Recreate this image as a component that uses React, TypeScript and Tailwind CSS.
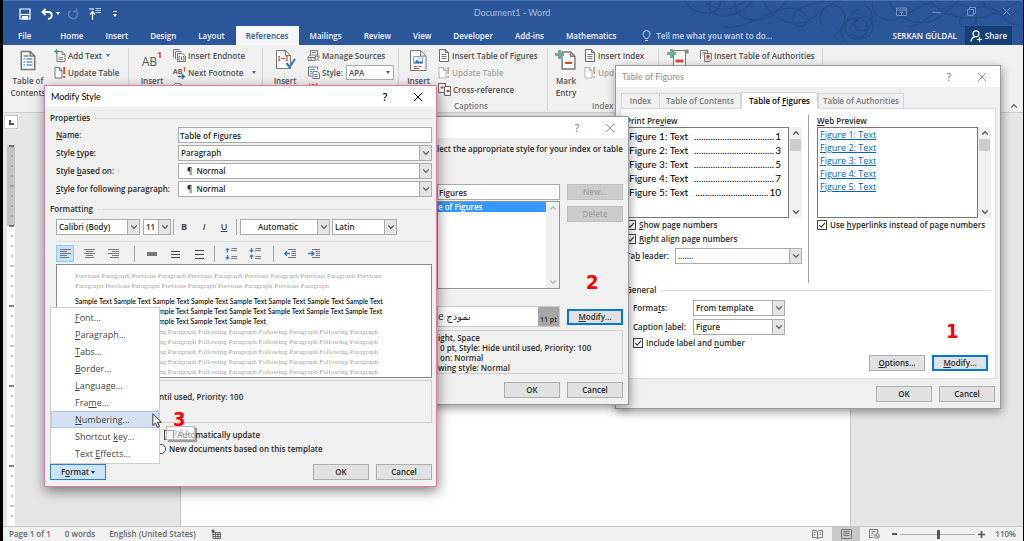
import React, { useState } from "react";
import type { ReactNode } from "react";

const BTN =
  "flex h-4 w-14 flex-none items-center justify-center border border-[#adadad] bg-[#e1e1e1] text-[#2a2a2a]";
const BTN_DEFAULT =
  "flex h-4 w-14 flex-none items-center justify-center border border-[#0078d7] bg-[#e1e1e1] text-[#2a2a2a] outline outline-1 -outline-offset-2 outline-[#0078d7]";
const BTN_DISABLED =
  "flex h-4 w-14 flex-none items-center justify-center border border-[#bfbfbf] bg-[#cccccc] text-[#a2a2a2]";

/* Renders a caption whose access key is the letter after "&". */
function Key({ t }: { t: string }) {
  const i = t.indexOf("&");
  if (i < 0) return <>{t}</>;
  return (
    <span className="whitespace-nowrap">
      {t.slice(0, i)}
      <span className="underline underline-offset-1">{t[i + 1]}</span>
      {t.slice(i + 2)}
    </span>
  );
}

function Chevron({ up, className }: { up?: boolean; className?: string }) {
  return (
    <svg viewBox="0 0 8 8" className={className ?? "size-2"} fill="none" stroke="currentColor" strokeWidth="1.2">
      <path d={up ? "M1.2 5.6 4 2.6 6.8 5.6" : "M1.2 2.4 4 5.4 6.8 2.4"} />
    </svg>
  );
}

function Combo({ label, id, value, className, pad }: { label?: string; id?: string; value: string; className: string; pad?: string }) {
  return (
    <div className={"relative h-4 border border-[#ababab] bg-white " + className}>
      <select
        id={id}
        aria-label={label}
        className={"block h-full w-full appearance-none bg-transparent leading-[14px] outline-none " + (pad ?? "pl-[2px]")}
      >
        <option>{value}</option>
      </select>
      <span className="pointer-events-none absolute inset-y-0 right-0 flex w-3 items-center justify-center border-l border-[#ababab] bg-[#e4e4e4] text-[#555]">
        <Chevron />
      </span>
    </div>
  );
}

function Check({ children, defaultChecked, id }: { children: ReactNode; defaultChecked?: boolean; id: string }) {
  return (
    <div className="flex h-[14px] items-center gap-[3px]">
      <span className="relative flex size-[10px] flex-none">
        <input
          id={id}
          type="checkbox"
          defaultChecked={defaultChecked}
          className="peer size-[10px] appearance-none border border-[#444] bg-white"
        />
        <svg viewBox="0 0 10 10" className="pointer-events-none absolute inset-0 hidden size-[10px] peer-checked:block" fill="none" stroke="#333" strokeWidth="1.1">
          <path d="M2.2 5 4.2 7.2 8 2.8" />
        </svg>
      </span>
      <label htmlFor={id} className="whitespace-nowrap">{children}</label>
    </div>
  );
}

function Group({ title }: { title: string }) {
  return (
    <div className="flex h-3 items-center gap-1">
      <span>{title}</span>
      <span className="h-px flex-1 bg-[#dcdcdc]" />
    </div>
  );
}

function TitleBar({ title, active }: { title?: string; active?: boolean }) {
  return (
    <header className={"flex h-[21px] flex-none items-center bg-white pr-[13px] font-[Lato] text-[9px] font-normal " + (active ? "text-black" : "text-[#8c8c8c]")}>
      <h2 className="flex-1 pl-[6px]">{title}</h2>
      <button aria-label="Help" className="w-3 font-['Open_Sans'] text-[10px] font-semibold leading-none">?</button>
      <button aria-label="Close" className="ml-[22px]">
        <svg viewBox="0 0 10 10" className="size-[10px]" fill="none" stroke="currentColor" strokeWidth="1">
          <path d="M1 1 9 9M9 1 1 9" />
        </svg>
      </button>
    </header>
  );
}

function ScrollBar({ thumb, className }: { thumb?: boolean; className?: string }) {
  return (
    <div className={"flex w-[13px] flex-none flex-col items-center bg-[#f0f0f0] py-[2px] " + (className ?? "text-[#444]")}>
      <Chevron up />
      {thumb && <span className="mt-[2px] h-3 w-[11px] bg-[#cdcdcd]" />}
      <span className="flex-1" />
      <Chevron />
    </div>
  );
}

/* ---------- ribbon icons ---------- */

function DocIcon({ className, children, stroke }: { className?: string; children?: ReactNode; stroke?: string }) {
  return (
    <svg viewBox="0 0 12 13" className={className ?? "h-[13px] w-3 flex-none"} fill="none">
      <path d="M1.5.5h6l3 3v9h-9z" fill="#fff" stroke={stroke ?? "#6a6a6a"} />
      <path d="M7.5.5v3h3" stroke={stroke ?? "#6a6a6a"} />
      {children}
    </svg>
  );
}

const Lines = ({ c = "#777" }: { c?: string }) => <path d="M3.5 5.5h5M3.5 7.5h5M3.5 9.5h5" stroke={c} />;
const Plus = ({ className }: { className?: string }) => (
  <svg viewBox="0 0 9 9" className={className ?? "size-[9px]"} stroke="#6fae93" strokeWidth="3">
    <path d="M4.5 0v9M0 4.5h9" />
  </svg>
);

function AddTextIcon() {
  return (
    <svg viewBox="0 0 12 13" className="h-[13px] w-3 flex-none" fill="none">
      <path d="M3 2.5h5l3 3v7H3z" fill="#fff" stroke="#777" />
      <path d="M8 2.5v3h3M5 8.5h4M5 10.5h4" stroke="#777" />
      <path d="M2.5 0v5M0 2.5h5" stroke="#4d9a78" strokeWidth="1.4" />
    </svg>
  );
}

function UpdateIcon({ disabled }: { disabled?: boolean }) {
  const c = disabled ? "#b5aeb5" : "#777";
  return (
    <svg viewBox="0 0 12 13" className="h-[13px] w-3 flex-none" fill="none">
      <path d="M1 1.5h4.5l2.5 3v7.5H1z" fill="#fff" stroke={c} />
      <path d="M5.5 1.5v3H8" stroke={c} />
      <path d="M10.2 1v7M10.2 10v2" stroke={disabled ? "#b5aeb5" : "#d9482b"} strokeWidth="1.8" />
    </svg>
  );
}

function EndnoteIcon() {
  return (
    <svg viewBox="0 0 13 13" className="size-[13px] flex-none" fill="none" stroke="#777">
      <path d="M.5 8V.5h6M2.5 10V2.5h6" />
      <path d="M4.5 4.5h5l3 2.500v5.500h-8z" fill="#fff" />
      <path d="M7 7.500H6v3.500h1M10 7.500h1v3.500h-1M8.500 7.500v3.500" stroke="#3e76b8" />
    </svg>
  );
}

function NextFootnoteIcon() {
  return (
    <span className="relative flex h-3 w-[13px] flex-none text-[7px] leading-[9px] text-[#444]">
      AB
      <svg viewBox="0 0 13 12" className="absolute inset-0 h-3 w-[13px]" fill="none">
        <path d="M10.500 1 11.500.500v4" stroke="#d9482b" />
        <path d="M5 9.500h6M9 7.200l2.400 2.300L9 11.800" stroke="#2f6db5" strokeWidth="1.300" />
      </svg>
    </span>
  );
}

function SourcesIcon() {
  return (
    <svg viewBox="0 0 13 13" className="size-[13px] flex-none" fill="none" stroke="#777">
      <path d="M3.500 6V1.500h7V6M1 8.500 3 6h8l1.500 2.500M1 8.500h7v3H1z" fill="#fff" />
      <path d="M5 3.500h4M2.500 10h3" />
      <circle cx="9.500" cy="9" r="1.800" />
      <path d="M11 10.500 12.500 12" />
    </svg>
  );
}

function StyleIcon() {
  return (
    <svg viewBox="0 0 13 13" className="size-[13px] flex-none" fill="none">
      <path d="M1.500 1h9v2.500M1.500 1v9H5" stroke="#777" />
      <path d="M3 3.500h5M3 5.500h2M3 7.500h2" stroke="#5b93cf" />
      <path d="M6 5.500h4l2.500 2v5H6z" fill="#fff" stroke="#777" />
      <path d="M7.500 8.500h3M7.500 10.500h3" stroke="#3e76b8" />
    </svg>
  );
}

function BibliographyIcon() {
  return (
    <svg viewBox="0 0 13 13" className="size-[13px] flex-none" fill="none" stroke="#d9482b">
      <path d="M1.500 3.500 3 .8M5 1.500h2M8.500 3l1-2 1 2" strokeWidth="1.200" />
      <path d="M2 5h9v7.500H2z" stroke="#777" fill="#fff" />
    </svg>
  );
}

function CrossRefIcon() {
  return (
    <svg viewBox="0 0 13 13" className="size-[13px] flex-none" fill="none">
      <path d="M.5.5h7v9h-7z" fill="#fff" stroke="#666" />
      <path d="M6.500 3.500h6v9h-6z" fill="#fff" stroke="#666" />
      <path d="M2.500 4.500h3M8.500 8h3" stroke="#d9482b" strokeWidth="2" />
    </svg>
  );
}

function AuthoritiesIcon() {
  return (
    <svg viewBox="0 0 12 12" className="size-3 flex-none" fill="none" stroke="#777">
      <path d="M.5 9V.5h7V3M2.500 2.500h3M2.500 4.500h1" />
      <path d="M4.500 3.500h7v6l-2 2h-5z" fill="#fff" />
      <circle cx="8" cy="6.500" r="1.500" fill="#d9482b" stroke="#d9482b" />
      <path d="M7 8.500v2M9 8.500v2" stroke="#d9482b" />
    </svg>
  );
}

function BigButton({ icon, lines, className }: { icon: ReactNode; lines: string[]; className?: string }) {
  return (
    <button className={"flex flex-none flex-col items-center pt-[4px] leading-3 " + (className ?? "")}>
      <span className="flex h-[22px] items-center">{icon}</span>
      <span className="mt-[4px]">
        {lines.map((l) => (
          <span key={l} className="block whitespace-nowrap">{l}</span>
        ))}
      </span>
    </button>
  );
}

function Small({ icon, text, disabled, arrow }: { icon: ReactNode; text: string; disabled?: boolean; arrow?: string }) {
  return (
    <button disabled={disabled} className={"flex h-[17px] items-center gap-[2px] whitespace-nowrap " + (disabled ? "text-[#a6a6a6]" : "")}>
      {icon}
      {text}
      {arrow && <span className={"border-x-[2px] border-t-[3px] border-x-transparent border-t-[#666] " + arrow} />}
    </button>
  );
}

const Sep = ({ className }: { className?: string }) => <span className={"mt-[3px] h-[63px] w-px flex-none bg-[#d5d5d5] " + (className ?? "")} />;

function Ribbon() {
  return (
    <section className="flex h-[68px] flex-none border-b border-[#cfcfcf] bg-[#f1f1f1] pl-1 font-semibold text-[#505050]">
      <div className="flex w-[121px] flex-none">
        <BigButton
          className="w-[42px]"
          lines={["Table of", "Contents"]}
          icon={
            <DocIcon className="h-[21px] w-[18px]" stroke="#777">
              <path d="M3 3.500h3.500M3 5.500h1M3 7.500h1M3 9.500h1M5 5.500h4M5 7.500h4M5 9.500h4" stroke="#5b93cf" strokeWidth=".9" />
            </DocIcon>
          }
        />
        <div className="pl-[5px] pt-[2px]">
          <Small icon={<AddTextIcon />} text="Add Text" arrow="ml-[2px]" />
          <Small icon={<UpdateIcon />} text="Update Table" />
        </div>
      </div>
      <Sep />
      <div className="flex w-[133px] flex-none">
        <BigButton
          className="w-[42px] pl-[4px]"
          lines={["Insert"]}
          icon={
            <span className="flex pt-[3px] text-[12px] font-medium text-[#555]">
              AB<sup className="text-[9px] font-bold leading-[8px] text-[#d9482b]">1</sup>
            </span>
          }
        />
        <div className="pl-[2px] pt-[2px]">
          <Small icon={<EndnoteIcon />} text="Insert Endnote" />
          <Small icon={<NextFootnoteIcon />} text="Next Footnote" arrow="ml-[7px]" />
          <span className="flex h-[17px] items-center"><DocIcon stroke="#999" /></span>
        </div>
      </div>
      <Sep />
      <div className="flex w-[135px] flex-none">
        <BigButton
          className="w-[44px]"
          lines={["Insert"]}
          icon={
            <svg viewBox="0 0 21 22" className="h-[22px] w-[21px]" fill="none">
              <path d="M1.500 1.500h9l5 5v13h-14z" fill="#fff" stroke="#777" />
              <path d="M10.500 1.500v5h5" stroke="#777" />
              <path d="M5 7.500H4v4h1M11 7.500h1v4h-1M6 9.500h4" stroke="#d9482b" strokeWidth="1.200" />
              <path d="m11.500 14 3 4 5.500-8" stroke="#3e76b8" strokeWidth="2.200" />
            </svg>
          }
        />
        <div className="pt-[2px]">
          <Small icon={<SourcesIcon />} text="Manage Sources" />
          <div className="flex h-[17px] items-center gap-[2px]">
            <StyleIcon />
            <label htmlFor="cite">Style:</label>
            <div className="relative ml-px h-[15px] w-12 border border-[#ababab] bg-white">
              <select id="cite" className="block h-full w-full appearance-none bg-transparent pl-[2px] leading-[13px]">
                <option>APA</option>
              </select>
              <span className="pointer-events-none absolute right-[3px] top-[5px] border-x-[2px] border-t-[3px] border-x-transparent border-t-[#555]" />
            </div>
          </div>
          <span className="flex h-[17px] items-center"><BibliographyIcon /></span>
        </div>
      </div>
      <Sep />
      <div className="flex w-[148px] flex-none">
        <BigButton
          className="w-[39px]"
          lines={["Insert"]}
          icon={
            <svg viewBox="0 0 17 21" className="h-[21px] w-[17px]" fill="none">
              <path d="M.5.5h10l5.500 5.500v14.500H.5z" fill="#fff" stroke="#777" />
              <path d="M10.500.5V6H16" stroke="#777" />
              <path d="M3.500 6.500h9v7h-9z" fill="#fff" stroke="#7fa7d6" />
              <path d="m4 13 3-3.500L9.500 12l1.500-1.500 1.500 2.500z" fill="#3e76b8" />
              <circle cx="9.500" cy="8.500" r="1" fill="#e8b04a" />
              <path d="M4 16.500h3M8.500 16.500h3M4 18.500h5" stroke="#d9482b" />
            </svg>
          }
        />
        <div className="pt-[2px]">
          <Small icon={<DocIcon><Lines /></DocIcon>} text="Insert Table of Figures" />
          <Small icon={<UpdateIcon disabled />} text="Update Table" disabled />
          <Small icon={<CrossRefIcon />} text="Cross-reference" />
          <p className="pl-[16px] pt-[2px] leading-[12px] text-[#777]">Captions</p>
        </div>
      </div>
      <Sep />
      <div className="flex w-[110px] flex-none">
        <BigButton
          className="w-[36px]"
          lines={["Mark", "Entry"]}
          icon={
            <span className="relative flex pl-[5px]">
              <DocIcon className="h-[21px] w-[17px]" stroke="#777">
                <path d="M3.500 8.200h5" stroke="#d9482b" strokeWidth="1.600" />
              </DocIcon>
              <Plus className="absolute left-0 top-0 size-[9px]" />
            </span>
          }
        />
        <div className="pt-[2px]">
          <Small icon={<DocIcon><Lines /></DocIcon>} text="Insert Index" />
          <Small icon={<UpdateIcon disabled />} text="Upd" disabled />
          <p className="pl-[8px] pt-[19px] leading-[12px] text-[#777]">Index</p>
        </div>
      </div>
      <Sep />
      <div className="flex w-[163px] flex-none">
        <span className="relative ml-[8px] mt-[4px] flex h-[22px] w-[23px] flex-none pl-[6px]">
          <svg viewBox="0 0 16 21" className="h-[21px] w-4" fill="none">
            <path d="M.5 1.500h12v19H.5z" fill="#fff" stroke="#777" />
            <path d="M12.500.5h3v4h-3z" fill="#888" />
            <path d="M2.500 12h8" stroke="#d9482b" strokeWidth="3" />
          </svg>
          <Plus className="absolute left-0 top-0 size-[9px]" />
        </span>
        <div className="pl-[10px] pt-[2px]">
          <Small icon={<AuthoritiesIcon />} text="Insert Table of Authorities" />
        </div>
      </div>
      <Sep />
      <span className="flex-1" />
      <button aria-label="Collapse the ribbon" className="self-end px-[5px] pb-[2px] text-[#555]">
        <Chevron up />
      </button>
    </section>
  );
}

/* ---------- application header ---------- */

function QuickAccess() {
  return (
    <div className="flex h-[25px] items-center pl-4 text-white">
      <button aria-label="Save">
        <svg viewBox="0 0 12 12" className="size-3" fill="none" stroke="#fff" strokeWidth="1.200">
          <path d="M1 1h10v10H1z" />
          <path d="M1 6.500h10" />
          <path d="M3.500 8.500h5V11h-5z" fill="#fff" />
        </svg>
      </button>
      <button aria-label="Undo" className="ml-[10px] flex items-center gap-[3px]">
        <svg viewBox="0 0 12 12" className="size-3" fill="none" stroke="#fff" strokeWidth="1.800">
          <path d="M4.500 1 1.500 4 4.500 7M1.500 4H7c5 0 5 6 0 7" />
        </svg>
        <span className="border-x-[2px] border-t-[3px] border-x-transparent border-t-white" />
      </button>
      <button aria-label="Redo" className="ml-[7px]">
        <svg viewBox="0 0 12 12" className="size-3" fill="none" stroke="#5b80b8" strokeWidth="1.500">
          <path d="M3.500 2.500a4.500 4.500 0 1 0 5.500.3M9.500 0v3.500H6" />
        </svg>
      </button>
      <button aria-label="Paragraph spacing" className="ml-[10px]">
        <svg viewBox="0 0 13 12" className="h-3 w-[13px]" fill="none" stroke="#fff">
          <path d="M0 1h5M3.500 12V4M1 6.500 3.500 3.500 6 6.500" strokeWidth="1.200" />
          <path d="M6.500.5H12M6.500 2.500H12M6.500 4.500H12" opacity=".7" />
        </svg>
      </button>
      <button aria-label="Customize Quick Access Toolbar" className="ml-[11px] flex flex-col items-center gap-[2px]">
        <span className="h-px w-[4px] bg-white" />
        <span className="border-x-[2px] border-t-[3px] border-x-transparent border-t-white" />
      </button>
    </div>
  );
}

function Swirls() {
  return (
    <svg viewBox="0 0 340 45" className="pointer-events-none absolute right-0 top-0 h-[45px] w-[340px]" fill="none" stroke="#244d8a" strokeWidth="1.400">
      <path d="M2 0c8 14 28 16 34 6s-8-12-10-2c-2 12 24 18 44-4M52 0c-4 18 24 26 40 12C98 6 102 2 104 0" />
      <path d="M40 26c20 4 40-14 60-18s30 10 22 16-16-4-10-12 22-10 30-12M80 0c14 26 40 28 56 12 8-8 14-12 24-12" />
      <path d="M140 25c-8-10 2-24 14-20s10 22-4 30M176 20c-10 0-12 14-2 16s16-14 4-18-26 8-16 22M176 8c-18 8-18 30 0 30s18-24 4-22-8 14 0 14 14-20 2-26" />
      <path d="M190 0c-4 14 14 24 28 16 16-8 28-18 44-16M206 0c10 22 36 28 54 14 10-8 12-12 16-14" />
      <path d="M226 26c20-4 30-24 52-22s18 24 4 22 0-22 20-20 18 18 34 18M246 0c22 20 50 26 90 0" />
      <path d="M22 0c10 10 26 12 40 0M300 0c6 16 24 18 38 8" />
    </svg>
  );
}

const TABS = ["Home", "Insert", "Design", "Layout", "References", "Mailings", "Review", "View", "Developer", "Add-ins", "Mathematics"];

function AppHeader() {
  return (
    <header className="relative flex-none overflow-hidden border-t border-[#4a72ac] bg-[#2b579a] text-white">
      <Swirls />
      <div className="relative flex">
        <div className="flex-1">
          <QuickAccess />
        </div>
        <h1 className="pl-[9px] pt-[6px] font-[Lato] text-[9px] font-normal leading-3 text-[#a9bcd9]">Document1 - Word</h1>
        <div className="flex flex-1 items-start justify-end gap-6 pr-[11px] pt-[5px]">
          <button aria-label="Ribbon display options">
            <svg viewBox="0 0 11 11" className="size-[11px]" fill="none" stroke="#7391be">
              <path d="M.5 2h10v7.500H.5zM.5 4h10M5.500 9V5.500M4 7l1.500-1.500L7 7" />
            </svg>
          </button>
          <button aria-label="Minimize">
            <svg viewBox="0 0 11 11" className="size-[11px]" stroke="#7391be">
              <path d="M1.500 6.500h8" />
            </svg>
          </button>
          <button aria-label="Restore">
            <svg viewBox="0 0 11 11" className="size-[11px]" fill="none" stroke="#7391be">
              <path d="M1.500 3.500h6v6h-6zM3.500 3.500v-2h6v6h-2" />
            </svg>
          </button>
          <button aria-label="Close Word">
            <svg viewBox="0 0 11 11" className="size-[11px]" stroke="#7391be">
              <path d="m2 2 7 7M9 2 2 9" />
            </svg>
          </button>
        </div>
      </div>
      <nav className="relative flex h-[19px] items-stretch font-semibold text-[#f2f5fa]">
        <a href="#file" className="flex items-center pl-[15px] pr-[18px]">File</a>
        {TABS.map((t) => (
          <a
            key={t}
            href={"#" + t}
            className={t === "References" ? "flex items-center bg-[#f5f6f7] px-[10px] text-[#2b579a]" : "flex items-center px-[11px]"}
          >
            {t}
          </a>
        ))}
        <span className="ml-[15px] flex items-center gap-[5px] text-[#c7d4e8]">
          <svg viewBox="0 0 9 12" className="h-3 w-[9px]" fill="none" stroke="#c7d4e8">
            <path d="M3 8.500C3 7 1 6.500 1 4a3.500 3.500 0 0 1 7 0c0 2.500-2 3-2 4.500zM3 10.500h3" />
          </svg>
          Tell me what you want to do...
        </span>
        <span className="flex-1" />
        <span className="flex items-center pr-2">SERKAN GÜLDAL</span>
        <button className="mr-[11px] flex items-center gap-[3px] bg-[#173f77] px-[5px]">
          <svg viewBox="0 0 12 12" className="size-3" fill="none" stroke="#fff" strokeWidth="1.200">
            <circle cx="6" cy="3.800" r="3" />
            <path d="M1 11.500c.5-3 2-4.500 4-4.800M9.500 7v5M7 9.500h5" />
          </svg>
          Share
        </button>
      </nav>
    </header>
  );
}

/* ---------- document area ---------- */

function VerticalRuler() {
  return (
    <div className="flex w-[14px] flex-none flex-col items-center">
      <span className="mt-[2px] flex size-[14px] items-center justify-center border border-[#ccc] bg-white">
        <span className="size-[5px] border-b-2 border-l-2 border-[#555]" />
      </span>
      <svg className="mt-[16px] w-2 flex-1" preserveAspectRatio="none">
        <rect width="8" height="81" fill="#c3c3c3" />
        <rect y="81" width="8" height="400" fill="#fff" />
        {Array.from({ length: 38 }, (_, i) => {
          const k = i % 8;
          return k === 0 ? (
            <path key={i} d={`M2 ${i * 10 + 1}h5`} stroke="#555" strokeWidth="1.500" />
          ) : (
            <path key={i} d={k === 4 ? `M3 ${i * 10 + 1}h4` : `M4 ${i * 10 + 1}h2`} stroke="#8a8a8a" />
          );
        })}
      </svg>
    </div>
  );
}

function StatusBar() {
  return (
    <footer className="flex h-[15px] flex-none items-center border-t border-[#c6c6c6] bg-[#f1f1f1] pl-[6px] pr-[7px] font-semibold text-[#666]">
      <span>Page 1 of 1</span>
      <span className="ml-[14px]">0 words</span>
      <span className="ml-[14px]">English (United States)</span>
      <svg viewBox="0 0 10 10" className="ml-[15px] size-[10px]" fill="none" stroke="#666">
        <path d="M2 3.500h7.500v6H2zM2 5.500h7.500M2 7.500h7.500M4.500 3.500v6M7 3.500v6" />
        <circle cx="2" cy="2" r="1.500" fill="#444" stroke="none" />
      </svg>
      <span className="flex-1" />
      <button aria-label="Read mode" className="mr-[9px]">
        <svg viewBox="0 0 11 10" className="h-[10px] w-[11px]" fill="none" stroke="#777">
          <path d="M.5 1.500h3l2 1 2-1h3v7h-3l-2 1-2-1h-3zM5.500 2.500v7M2 3.500h1.500M2 5.500h1.500M7.500 3.500H9M7.500 5.500H9" />
        </svg>
      </button>
      <button aria-label="Print layout" className="flex h-[14px] w-7 items-center justify-center bg-[#c8c8c8]">
        <svg viewBox="0 0 11 10" className="h-[10px] w-[11px]" fill="none" stroke="#777">
          <path d="M.5.5h10v9H.5zM2.500 2.500h6M2.500 4.500h6M2.500 6.500h6" />
        </svg>
      </button>
      <button aria-label="Web layout" className="ml-[9px]">
        <svg viewBox="0 0 11 10" className="h-[10px] w-[11px]" fill="none" stroke="#777">
          <path d="M4.500 8.500h-4v-8h8V4M2.500 2.500h4M2.500 4.500h2M2.500 6.500h1" />
          <circle cx="8" cy="7" r="2.300" />
          <path d="m6.500 6 3 2" />
        </svg>
      </button>
      <button aria-label="Zoom out" className="ml-[12px] flex h-2 items-center">
        <span className="h-[2px] w-[5px] bg-[#555]" />
      </button>
      <input
        type="range"
        aria-label="Zoom"
        defaultValue={51}
        className="mx-[3px] h-[9px] w-[75px] appearance-none bg-[linear-gradient(#aaa,#aaa)] bg-[length:100%_1px] bg-center bg-no-repeat [&::-webkit-slider-thumb]:h-[9px] [&::-webkit-slider-thumb]:w-[3px] [&::-webkit-slider-thumb]:appearance-none [&::-webkit-slider-thumb]:bg-[#555]"
      />
      <button aria-label="Zoom in" className="mr-[10px]">
        <svg viewBox="0 0 7 7" className="size-[7px]" stroke="#555" strokeWidth="1.600">
          <path d="M3.500 0v7M0 3.500h7" />
        </svg>
      </button>
      <span>110%</span>
    </footer>
  );
}

/* ---------- "Table of Figures" dialog ---------- */

const FIGURES: [string, string][] = [
  ["Figure 1: Text", "1"],
  ["Figure 2: Text", "3"],
  ["Figure 3: Text", "5"],
  ["Figure 4: Text", "7"],
  ["Figure 5: Text", "10"],
];

function Badge({ n, className }: { n: string; className: string }) {
  return (
    <span className={"pointer-events-none absolute font-['DejaVu_Sans_Condensed','DejaVu_Sans',sans-serif] text-[20px] font-bold leading-none text-[#ff0000] " + className}>
      {n}
    </span>
  );
}

function TableOfFiguresDialog() {
  const tab = "flex h-[15px] items-center border border-b-0 border-[#d5d5d5] text-[#777]";
  return (
    <section aria-label="Table of Figures" className="absolute left-[615px] top-[65px] flex w-[386px] flex-col border border-[#9b9b9b] bg-[#f0f0f0] shadow-[1px_3px_9px_rgba(0,0,0,0.4)]">
      <TitleBar title="Table of Figures" />
      <div role="tablist" className="mt-[5px] flex h-4 items-end pl-[5px]">
        <button role="tab" className={tab + " w-[39px] justify-center"}>Index</button>
        <button role="tab" className={tab + " -ml-px w-[82px] justify-center"}>Table of Contents</button>
        <button role="tab" aria-selected="true" className="relative z-10 -mb-px flex h-[17px] w-[77px] items-center justify-center border border-b-0 border-[#d5d5d5] bg-white text-black">
          <Key t="Table of &Figures" />
        </button>
        <button role="tab" className={tab + " w-[86px] justify-center"}>Table of Authorities</button>
      </div>
      <div className="mx-[4px] h-[271px] border border-[#dcdcdc] bg-white pl-[5px] pr-[4px]">
        <div className="flex">
          <div className="w-[176px] pt-[6px]">
            <h3 className="h-3 leading-3"><Key t="Print Pre&view" /></h3>
            <div className="flex h-[91px]">
              <div className="min-w-0 flex-1 border border-[#777] pl-[2px] pr-[7px] pt-px font-[Lato] text-[10px] font-normal text-black">
                {FIGURES.map(([t, n]) => (
                  <div key={t} className="flex h-[14px] items-center">
                    <span className="whitespace-nowrap">{t}</span>
                    <span className="flex-1 text-right">{".".repeat(n.length > 1 ? 31 : 34)}</span>
                    <span className="pl-px">{n}</span>
                  </div>
                ))}
              </div>
              <ScrollBar thumb />
            </div>
            <Check id="spn" defaultChecked><Key t="&Show page numbers" /></Check>
            <Check id="rap" defaultChecked><Key t="&Right align page numbers" /></Check>
            <div className="mt-[2px] flex items-center justify-between">
              <label htmlFor="leader"><Key t="Ta&b leader:" /></label>
              <Combo id="leader" value="......." className="w-[127px]" />
            </div>
          </div>
          <span className="ml-[6px] mt-[6px] h-[168px] w-px bg-[#a0a0a0]" />
          <div className="flex-1 pl-[8px] pt-[6px]">
            <h3 className="h-3 leading-3"><Key t="&Web Preview" /></h3>
            <div className="flex h-[91px]">
              <div className="min-w-0 flex-1 border border-[#777] pl-[2px] text-[9px] font-medium">
                {FIGURES.map(([t]) => (
                  <a key={t} href="#fig" className="block leading-[13px] text-[#0563c1] underline">{t}</a>
                ))}
              </div>
              <ScrollBar thumb />
            </div>
            <Check id="hyp" defaultChecked><Key t="Use &hyperlinks instead of page numbers" /></Check>
          </div>
        </div>
        <div className="mt-px"><Group title="General" /></div>
        <div className="mt-[4px] flex h-4 items-center pl-[7px]">
          <label htmlFor="formats" className="w-[60px]"><Key t="Forma&ts:" /></label>
          <Combo id="formats" value="From template" className="w-[92px]" />
        </div>
        <div className="mt-[3px] flex h-4 items-center pl-[7px]">
          <label htmlFor="caplabel" className="w-[60px]"><Key t="Caption &label:" /></label>
          <Combo id="caplabel" value="Figure" className="w-[92px]" />
        </div>
        <div className="mt-px pl-[7px]">
          <Check id="incl" defaultChecked><Key t="Include label and &number" /></Check>
        </div>
        <div className="mt-[5px] flex justify-end gap-[7px] pr-[3px]">
          <button className={BTN}><Key t="&Options..." /></button>
          <button className={BTN_DEFAULT}><Key t="&Modify..." /></button>
        </div>
      </div>
      <div className="flex justify-end gap-[7px] px-[5px] pb-[6px] pt-[7px]">
        <button className={BTN}>OK</button>
        <button className={BTN}>Cancel</button>
      </div>
      <Badge n="1" className="left-[330px] top-[255px]" />
    </section>
  );
}

/* ---------- "Style" dialog ---------- */

function StyleDialog() {
  return (
    <section aria-label="Style" className="absolute left-[430px] top-[116px] flex w-[199px] flex-col border border-[#9b9b9b] bg-[#f0f0f0] shadow-[1px_3px_9px_rgba(0,0,0,0.4)]">
      <TitleBar />
      <div className="pb-[6px] pl-[6px] pr-[5px]">
        <p className="mt-[5px] h-3 whitespace-nowrap leading-3">lect the appropriate style for your index or table</p>
        <div className="mt-[29px] flex gap-[7px]">
          <div className="min-w-0 flex-1">
            <input aria-label="Styles" defaultValue="Figures" className="block h-4 w-full border border-[#ababab] bg-white pl-px outline-none" />
            <div className="mt-px flex h-[88px] border border-[#8e939c] bg-white">
              <ul className="flex-1">
                <li className="h-[10px] bg-[#3399ff] leading-[10px] text-white">e of Figures</li>
              </ul>
              <ScrollBar className="text-[#b0b0b0]" />
            </div>
          </div>
          <div className="flex flex-col gap-[6px]">
            <button disabled className={BTN_DISABLED}>New...</button>
            <button disabled className={BTN_DISABLED}>Delete</button>
          </div>
        </div>
        <div className="mt-[17px] flex items-center gap-[7px]">
          <div className="flex h-[21px] flex-1 border border-[#c8c8c8] bg-white">
            <span className="flex-1 font-['Open_Sans','DejaVu_Sans',sans-serif] text-[10px] font-normal leading-[19px]">e نموذج</span>
            <span className="w-[21px] bg-[#a6a6a6] pt-[8px] text-center font-['Open_Sans'] text-[7px] leading-[10px]">11 pt</span>
          </div>
          <button className={BTN_DEFAULT}><Key t="&Modify..." /></button>
        </div>
        <div className="mt-[3px] h-[44px] whitespace-pre border border-[#d0d0d0] pt-[2px] leading-[10px]">
          <p>ight, Space</p>
          <p className="pl-[2px]">0 pt, Style: Hide until used, Priority: 100</p>
          <p className="pl-[2px]">on: Normal</p>
          <p>wing style: Normal</p>
        </div>
        <div className="mt-[8px] flex justify-end gap-[7px]">
          <button className={BTN}>OK</button>
          <button className={BTN}>Cancel</button>
        </div>
      </div>
      <Badge n="2" className="left-[155px] top-[155px]" />
    </section>
  );
}

/* ---------- "Modify Style" dialog ---------- */

const rowsPath = (widths: number[], align: "l" | "c" | "r") =>
  widths.map((w, i) => `M${align === "l" ? 1 : align === "r" ? 12 - w : (13 - w) / 2} ${2.5 + i * 2}h${w}`).join("");

function Tool({ label, children, active }: { label: string; children: ReactNode; active?: boolean }) {
  return (
    <button aria-label={label} className={"flex h-[17px] w-[18px] flex-none items-center justify-center border " + (active ? "border-[#90c8f6] bg-[#c5e0f7]" : "border-transparent")}>
      <svg viewBox="0 0 13 13" className="size-[13px]" fill="none" stroke="#777">
        {children}
      </svg>
    </button>
  );
}

const VSep = ({ className }: { className?: string }) => <span className={"h-4 w-px flex-none bg-[#ababab] " + (className ?? "")} />;

function FormatToolbars() {
  const letter = "flex h-4 w-5 items-center justify-center font-['Open_Sans'] text-[9px] text-[#444]";
  return (
    <>
      <div className="mt-[4px] flex h-4 items-center pl-[6px]">
        <Combo label="Font" value="Calibri (Body)" className="w-[84px]" />
        <Combo label="Font size" value="11" className="ml-[3px] w-[28px]" />
        <VSep className="ml-[2px]" />
        <button aria-label="Bold" className={letter + " font-bold"}>B</button>
        <button aria-label="Italic" className={letter + " font-['DejaVu_Serif'] italic"}>I</button>
        <button aria-label="Underline" className={letter + " font-semibold underline"}>U</button>
        <VSep className="ml-[2px]" />
        <Combo label="Font color" value="Automatic" className="ml-[3px] w-[90px]" pad="pl-[17px]" />
        <Combo label="Script" value="Latin" className="ml-[2px] w-[65px]" />
      </div>
      <div className="ml-[6px] mt-[6px] h-px bg-[#dcdcdc]" />
      <div className="mt-[3px] flex h-[17px] items-center pl-[6px]">
        <Tool label="Align left" active><path d={rowsPath([11, 7, 11, 7, 9], "l")} /></Tool>
        <span className="w-[6px]" />
        <Tool label="Center"><path d={rowsPath([11, 7, 11, 7, 9], "c")} /></Tool>
        <span className="w-[6px]" />
        <Tool label="Align right"><path d={rowsPath([11, 7, 11, 7, 9], "r")} /></Tool>
        <VSep className="ml-3" />
        <span className="w-[7px]" />
        <Tool label="Single spacing"><path d="M2 7h10" stroke="#777" strokeWidth="4" /></Tool>
        <span className="w-[6px]" />
        <Tool label="1.5 spacing"><path d="M2 4.500h9M2 7.500h9M2 10.500h9" stroke="#444" /></Tool>
        <span className="w-[6px]" />
        <Tool label="Double spacing"><path d="M2 3.500h9M2 7.500h9M2 11.500h9" stroke="#444" /></Tool>
        <VSep className="ml-[6px]" />
        <span className="w-[7px]" />
        <Tool label="Increase paragraph spacing">
          <path d="M2.500 2v3.500M.8 3.200 2.500 1.500l1.700 1.700M2.500 8v3.500M.8 10.200 2.500 12l1.700-1.800" stroke="#3e76b8" strokeWidth="1.200" />
          <path d="M6.500 1.500H12M6 3.500h6M6.500 9.500H12M6 11.500h6" />
        </Tool>
        <span className="w-[6px]" />
        <Tool label="Decrease paragraph spacing">
          <path d="M2.500 1v3.500M.8 3.200 2.500 5l1.700-1.800M2.500 8.500V12M.8 9.700 2.500 8l1.700 1.700" stroke="#3e76b8" strokeWidth="1.200" />
          <path d="M6.500 1.500H12M6 3.500h6M6.500 9.500H12M6 11.500h6" />
        </Tool>
        <VSep className="ml-[9px]" />
        <span className="w-[7px]" />
        <Tool label="Decrease indent">
          <path d="M4 2.500h8M7.500 4.500H12M7.500 6.500H12M7.500 8.500H12M4 10.500h8" />
          <path d="M6 6.500H1M3 4.200.8 6.500 3 8.800" stroke="#3e76b8" strokeWidth="1.500" />
        </Tool>
        <span className="w-[6px]" />
        <Tool label="Increase indent">
          <path d="M4 2.500h8M7.500 4.500H12M7.500 6.500H12M7.500 8.500H12M4 10.500h8" />
          <path d="M0 6.500h5.500M3.500 4.200l2.200 2.300-2.200 2.300" stroke="#3e76b8" strokeWidth="1.500" />
        </Tool>
      </div>
    </>
  );
}

const MENU = ["&Font...", "&Paragraph...", "&Tabs...", "&Border...", "&Language...", "Fra&me...", "&Numbering...", "Shortcut &key...", "Text &Effects..."];

function FormatMenu() {
  return (
    <ul role="menu" className="absolute left-[5px] top-[221px] z-20 w-[110px] border border-[#cfcfcf] bg-white py-px text-[9px] font-normal text-[#444]">
      {MENU.map((m) => (
        <li key={m}>
          <button
            role="menuitem"
            className={"flex h-[17px] w-full items-center border pl-[23px] " + (m === "&Numbering..." ? "border-[#b5c7e3] bg-[#d5e1f2]" : "border-transparent")}
          >
            <Key t={m} />
          </button>
        </li>
      ))}
    </ul>
  );
}

const repeat = (s: string, n: number) => Array(n).fill(s).join(" ");

function StylePreview() {
  return (
    <div className="ml-[6px] mt-[2px] h-[114px] overflow-hidden border border-[#8a8a8a] bg-white pl-[18px] pt-[6px]">
      <div className="whitespace-nowrap font-['Liberation_Serif'] text-[7px] font-normal leading-[10px] text-[#a3a3a3]">
        <p>{repeat("Previous Paragraph", 5)} Previous</p>
        <p>{repeat("Paragraph Previous", 4)} Paragraph</p>
      </div>
      <div className="mt-[5px] whitespace-nowrap font-[Lato] text-[7px] font-medium leading-[10px] text-black">
        <p>{repeat("Sample Text", 8)}</p>
        <p className="pl-[84px]">mple Text {repeat("Sample Text", 5)}</p>
        <p className="pl-[84px]">mple Text {repeat("Sample Text", 2)}</p>
      </div>
      <div className="mt-px whitespace-nowrap pl-[84px] font-['Liberation_Serif'] text-[7px] font-normal leading-[10px] text-[#a3a3a3]">
        {[0, 1, 2, 3, 4].map((i) => (
          <p key={i}>ng Paragraph {repeat("Following Paragraph", 3)}</p>
        ))}
      </div>
    </div>
  );
}

function ModifyStyleDialog() {
  const [name, setName] = useState("Table of Figures");
  const row = "flex h-[18px] items-center pl-[6px]";
  const lab = "w-[122px] flex-none whitespace-nowrap";
  return (
    <section aria-label="Modify Style" className="absolute left-[44px] top-[85px] flex w-[393px] flex-col border border-[#e5799f] bg-[#f0f0f0] shadow-[1px_4px_12px_rgba(0,0,0,0.5)]">
      <TitleBar title="Modify Style" active />
      <div className="pb-[6px] pl-[5px] pr-[4px] pt-[5px]">
        <Group title="Properties" />
        <div className="mt-[2px]">
          <div className={row}>
            <label htmlFor="sname" className={lab}><Key t="&Name:" /></label>
            <input id="sname" value={name} onChange={(e) => setName(e.target.value)} className="h-4 min-w-0 flex-1 border border-[#ababab] bg-white pl-px outline-none" />
          </div>
          <div className={row}>
            <label htmlFor="stype" className={lab}><Key t="Style &type:" /></label>
            <Combo id="stype" value="Paragraph" className="flex-1" />
          </div>
          <div className={row}>
            <label htmlFor="sbase" className={lab}><Key t="Style &based on:" /></label>
            <Combo id="sbase" value={"¶\u00a0\u00a0Normal"} className="flex-1" pad="pl-[8px]" />
          </div>
          <div className={row}>
            <label htmlFor="snext" className={lab}><Key t="&Style for following paragraph:" /></label>
            <Combo id="snext" value={"¶\u00a0\u00a0Normal"} className="flex-1" pad="pl-[8px]" />
          </div>
        </div>
        <div className="mt-[5px]"><Group title="Formatting" /></div>
        <FormatToolbars />
        <StylePreview />
        <div className="ml-[6px] mt-[2px] h-[43px] border border-[#cfcfcf] pl-[102px] pt-[10px] leading-3">ntil used, Priority: 100</div>
        <div className="relative mt-[5px] pl-[114px]">
          <Check id="auto"><Key t="A&utomatically update" /></Check>
          <span className="pointer-events-none absolute left-[116px] top-[-2px] flex h-[14px] w-[29px] items-center justify-center border border-[#bbb] bg-white/50 text-[8px] text-[#999]/60 shadow-[2px_2px_1px_rgba(0,0,0,0.35)]">
            9:54
          </span>
        </div>
        <div className="flex h-[14px] items-center gap-[3px] pl-[106px]">
          <input id="tmpl" type="radio" className="size-[10px] appearance-none rounded-full border border-[#444] bg-white" />
          <label htmlFor="tmpl">New documents based on this template</label>
        </div>
        <div className="mt-[8px] flex justify-end gap-[7px]">
          <button className="mr-auto flex h-4 w-14 items-center justify-center gap-[2px] border border-[#2f7fc1] bg-[#cce4f7] text-[#2a2a2a]">
            <Key t="F&ormat" />
            <span className="border-x-[2px] border-t-[3px] border-x-transparent border-t-[#333]" />
          </button>
          <button className={BTN}>OK</button>
          <button className={BTN}>Cancel</button>
        </div>
      </div>
      <FormatMenu />
      <svg viewBox="0 0 11 16" className="pointer-events-none absolute left-[107px] top-[327px] z-30 h-4 w-[11px]" fill="#fff" stroke="#222" strokeWidth=".9">
        <path d="M.8.8v11.700l2.700-2.500 1.900 4.300 2-.9-1.900-4.200h3.900z" />
      </svg>
      <Badge n="3" className="left-[128px] top-[323px] z-30" />
    </section>
  );
}

export default function App() {
  return (
    <main className="relative flex min-h-screen flex-col overflow-hidden border-l-[3px] border-r border-black bg-[#e6e6e6] font-['Open_Sans',sans-serif] text-[8px] leading-[12px] text-[#2a2a2a]">
      <AppHeader />
      <Ribbon />
      <div className="flex flex-1 pl-[1px]">
        <VerticalRuler />
        <div className="flex flex-1 pr-[10px] pt-[16px]">
          <article className="mx-auto w-[671px] border-x border-t border-[#c6c6c6] bg-white" />
        </div>
      </div>
      <StatusBar />
      <div className="absolute inset-y-0 -left-[3px] font-semibold">
        <TableOfFiguresDialog />
        <StyleDialog />
        <ModifyStyleDialog />
      </div>
    </main>
  );
}
